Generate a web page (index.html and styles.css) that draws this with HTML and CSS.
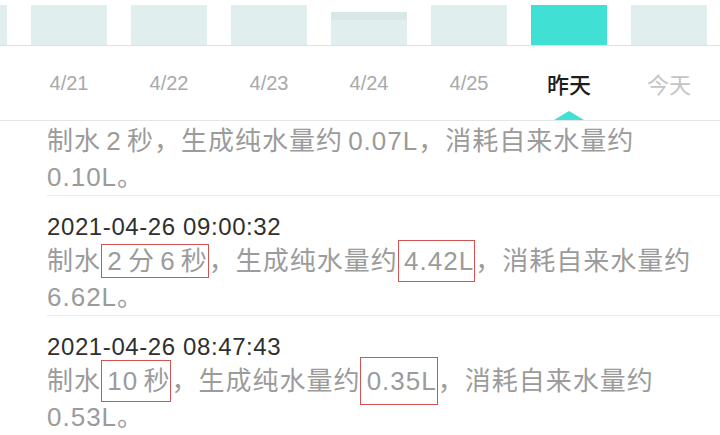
FILE: index.html
```html
<!DOCTYPE html>
<html lang="zh-CN">
<head>
    <meta charset="UTF-8">
    <meta name="viewport" content="width=device-width, initial-scale=1.0">
    <title>制水记录</title>
    <link rel="stylesheet" href="styles.css">
</head>
<body>
    <div class="page">
        <!-- daily bar chart, bars clipped at the top -->
        <div class="chart">
            <div class="col"><div class="bar" style="height: 40px"></div></div>
            <div class="col"><div class="bar" style="height: 40px"></div></div>
            <div class="col"><div class="bar" style="height: 40px"></div></div>
            <div class="col"><div class="bar" style="height: 40px"></div></div>
            <div class="col"><div class="bar bar-low" style="height: 33px"></div></div>
            <div class="col"><div class="bar" style="height: 40px"></div></div>
            <div class="col"><div class="bar bar-active" style="height: 40px"></div></div>
            <div class="col"><div class="bar" style="height: 40px"></div></div>
        </div>

        <div class="tabs">
            <div class="tab"></div>
            <div class="tab">4/21</div>
            <div class="tab">4/22</div>
            <div class="tab">4/23</div>
            <div class="tab">4/24</div>
            <div class="tab">4/25</div>
            <div class="tab tab-active">昨天</div>
            <div class="tab tab-today">今天</div>
        </div>

        <div class="list">
            <div class="list-inner">
                <div class="record">
                    <div class="record-time">2021-04-26 09:03:15</div>
                    <div class="record-text">制水 2 秒，生成纯水量约 0.07L，消耗自来水量约 0.10L。</div>
                </div>
                <div class="record">
                    <div class="record-time">2021-04-26 09:00:32</div>
                    <div class="record-text">制水<span class="mark mark-tight"> 2 分 6 秒</span>，生成纯水量约<span class="mark"> 4.42L</span>，消耗自来水量约 6.62L。</div>
                </div>
                <div class="record">
                    <div class="record-time">2021-04-26 08:47:43</div>
                    <div class="record-text">制水<span class="mark"> 10 秒</span>，生成纯水量约<span class="mark mark-tall"> 0.35L</span>，消耗自来水量约 0.53L。</div>
                </div>
            </div>
        </div>
    </div>
</body>
</html>
```

FILE: styles.css
```css
:root {
    --teal: #40e0d4;
    --bar: #e1eeee;
    --line: #e6eaea;
    --muted: #9b9b9b;
    --text: #2f2f2f;
    --mark: #d45454;
}
body {
    margin: 0;
    font-family: "Liberation Sans", "Noto Sans CJK SC", sans-serif;
    background-color: #ffffff;
    overflow: hidden;
}
.page {
    width: 720px;
    height: 435px;
    overflow: hidden;
}

/* Chart */
.chart {
    display: flex;
    align-items: flex-end;
    height: 45px;
    margin-left: -81px;
    border-bottom: 1px solid #d7e5e5;
}
.col {
    flex: 0 0 100px;
    display: flex;
    justify-content: center;
}
.bar {
    width: 76px;
    background-color: var(--bar);
}
.bar-low {
    background: linear-gradient(#d8e7e7 0 8px, var(--bar) 8px);
}
.bar-active {
    background: var(--teal);
}

/* Day tabs */
.tabs {
    display: flex;
    height: 74px;
    margin-left: -81px;
    border-bottom: 1px solid #dfe7e7;
}
.tab {
    flex: 0 0 100px;
    display: flex;
    align-items: center;
    justify-content: center;
    position: relative;
    font-size: 20px;
    color: #a9a9a9;
}
.tab-active {
    font-size: 22px;
    font-weight: 500;
    color: #1e1e1e;
}
.tab-active::after {
    content: "";
    position: absolute;
    bottom: 0;
    left: 50%;
    margin-left: -15px;
    border-left: 15px solid transparent;
    border-right: 15px solid transparent;
    border-bottom: 9px solid var(--teal);
}
.tab-today {
    font-size: 22px;
    color: #c4c4c4;
    padding-right: 10px;
}

/* Records */
.list {
    height: 314px;
    overflow: hidden;
}
.list-inner {
    margin-top: -45px;
}
.record {
    margin-left: 47px;
    padding: 15px 20px 0 0;
    border-bottom: 1px solid var(--line);
}
.record-time {
    font-size: 24px;
    line-height: 32px;
    letter-spacing: 0.6px;
    color: var(--text);
}
.record-text {
    font-size: 26px;
    line-height: 36px;
    letter-spacing: 1px;
    word-spacing: -3px;
    color: var(--muted);
}
.mark {
    border: 1.5px solid var(--mark);
    padding: 5px 0;
}
.mark-tight {
    padding: 1px 0;
}
.mark-tall {
    padding: 8px 0;
}
```
